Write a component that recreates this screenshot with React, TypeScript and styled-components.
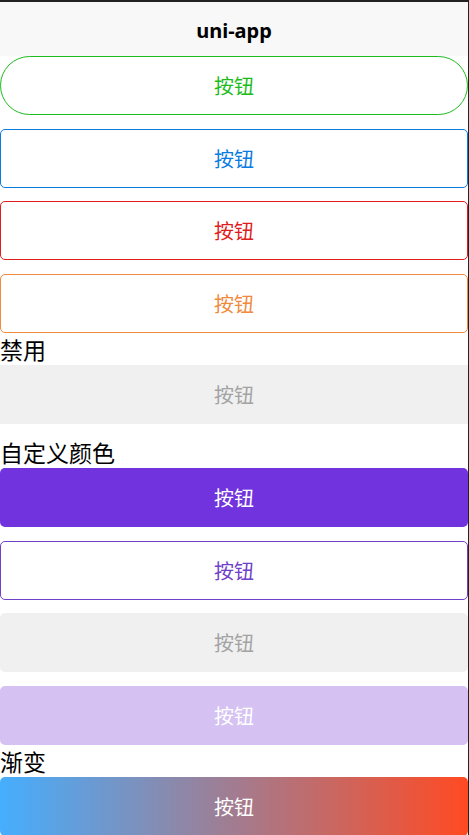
import React from 'react';
import styled, { createGlobalStyle, css } from 'styled-components';

const GlobalStyle = createGlobalStyle`
  html, body {
    margin: 0;
    padding: 0;
    background: #fff;
  }
  body {
    font-family: "Noto Sans", "Noto Sans CJK SC", sans-serif;
  }
`;

type Variant =
  | 'green'
  | 'blue'
  | 'red'
  | 'orange'
  | 'disabled'
  | 'purple'
  | 'purpleOutline'
  | 'gray'
  | 'purpleFaded'
  | 'gradient';

const variants: Record<Variant, ReturnType<typeof css>> = {
  green: css`
    border: 1px solid #1dbc1d;
    color: #1dbc1d;
    border-radius: 30px;
  `,
  blue: css`
    border: 1px solid #0a7ce0;
    color: #0a7ce0;
  `,
  red: css`
    border: 1px solid #e01c1c;
    color: #e01c1c;
  `,
  orange: css`
    border: 1px solid #ef8a3e;
    color: #ef8a3e;
  `,
  disabled: css`
    background: #f0f0f0;
    color: #a3a3a3;
    border-radius: 0;
  `,
  purple: css`
    background: #7033dd;
    color: #fff;
  `,
  purpleOutline: css`
    border: 1px solid #7040c8;
    color: #7040c8;
  `,
  gray: css`
    background: #f0f0f0;
    color: #a3a3a3;
  `,
  purpleFaded: css`
    background: #d5c2f3;
    color: #fff;
  `,
  gradient: css`
    background: linear-gradient(to right, #45aefe, #ff4a22);
    color: #fff;
  `,
};

const Frame = styled.div`
  width: 469px;
  height: 835px;
  box-sizing: border-box;
  border-top: 2px solid #222;
  border-right: 1px solid #222;
  overflow: hidden;
  display: flex;
  flex-direction: column;
`;

const NavBar = styled.div`
  height: 54px;
  flex-shrink: 0;
  background: #f8f8f8;
  display: flex;
  align-items: center;
  justify-content: center;
  padding-top: 2px;
  box-sizing: border-box;
  font-size: 20px;
  font-weight: bold;
  color: #000;
`;

const Content = styled.div`
  display: flex;
  flex-direction: column;
`;

const Button = styled.div<{ $variant: Variant }>`
  height: 59px;
  flex-shrink: 0;
  box-sizing: border-box;
  display: flex;
  align-items: center;
  justify-content: center;
  border-radius: 5px;
  background: #fff;
  font-family: "Noto Sans CJK SC", sans-serif;
  font-size: 20px;
  ${(p) => variants[p.$variant]}

  & + & {
    margin-top: 13.5px;
  }
`;

const Label = styled.div<{ $gap?: boolean }>`
  height: 32px;
  line-height: 32px;
  font-family: "Noto Sans CJK SC", sans-serif;
  font-size: 23px;
  color: #000;
  margin-top: ${(p) => (p.$gap ? '12.5px' : '0')};
`;

const App: React.FC = () => {
  return (
    <>
      <GlobalStyle />
      <Frame>
        <NavBar>uni-app</NavBar>
        <Content>
          <Button $variant="green">按钮</Button>
          <Button $variant="blue">按钮</Button>
          <Button $variant="red">按钮</Button>
          <Button $variant="orange">按钮</Button>
          <Label>禁用</Label>
          <Button $variant="disabled">按钮</Button>
          <Label $gap>自定义颜色</Label>
          <Button $variant="purple">按钮</Button>
          <Button $variant="purpleOutline">按钮</Button>
          <Button $variant="gray">按钮</Button>
          <Button $variant="purpleFaded">按钮</Button>
          <Label>渐变</Label>
          <Button $variant="gradient">按钮</Button>
        </Content>
      </Frame>
    </>
  );
};

export default App;
